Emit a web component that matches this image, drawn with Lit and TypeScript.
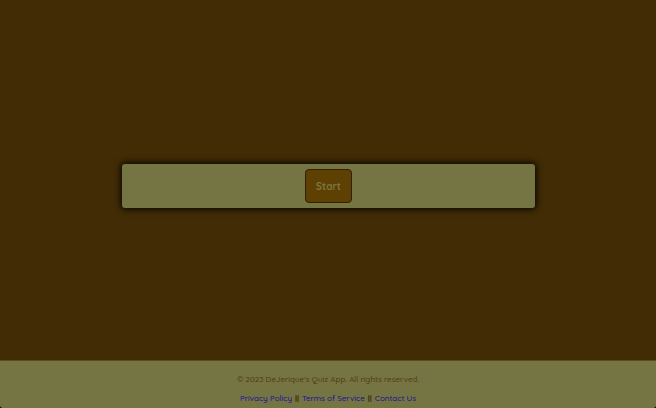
import { LitElement, html, css } from "lit";
import { customElement } from "lit/decorators.js";

@customElement("app-root")
export class AppRoot extends LitElement {
  static styles = css`
    :host {
      display: block;
      background: #000;
      font-family: Quicksand, Lato, "Open Sans", sans-serif;
    }
    .page {
      display: flex;
      flex-direction: column;
      min-height: 100vh;
      background: #422c05;
      border-radius: 0 0 3px 3px;
      overflow: hidden;
    }
    main {
      flex: 1;
      display: flex;
      align-items: center;
      justify-content: center;
      padding: 11px 0 0 1px;
    }
    .card {
      box-sizing: border-box;
      width: 63%;
      padding: 5px;
      display: flex;
      justify-content: center;
      background: #757443;
      border-radius: 3px;
      box-shadow: 0 0 7px 1px #000;
    }
    .start {
      font: 700 10px/16px Quicksand, Lato, "Open Sans", sans-serif;
      color: #7c7741;
      background: #5f4003;
      border: 1px solid #302004;
      border-radius: 4px;
      padding: 9px 10px 7px;
    }
    footer {
      display: flex;
      flex-direction: column;
      align-items: center;
      gap: 7px;
      padding: 12px 8px 4px;
      border-top: 1px solid #5b4d1e;
      background: #757443;
      color: #553c0b;
      font-size: 8px;
      font-weight: 500;
      line-height: 12px;
    }
    p {
      margin: 0;
    }
    nav {
      display: flex;
      gap: 3px;
    }
    nav span {
      color: #382806;
      font-weight: 700;
    }
    a {
      color: #1a109c;
      text-decoration: none;
    }
  `;

  render() {
    return html`
      <div class="page">
        <main>
          <section class="card">
            <button class="start" type="button">Start</button>
          </section>
        </main>
        <footer>
          <p>© 2023 DeJerique's Quiz App. All rights reserved.</p>
          <nav>
            <a href="#privacy">Privacy Policy</a>
            <span>||</span>
            <a href="#terms">Terms of Service</a>
            <span>||</span>
            <a href="#contact">Contact Us</a>
          </nav>
        </footer>
      </div>
    `;
  }
}
